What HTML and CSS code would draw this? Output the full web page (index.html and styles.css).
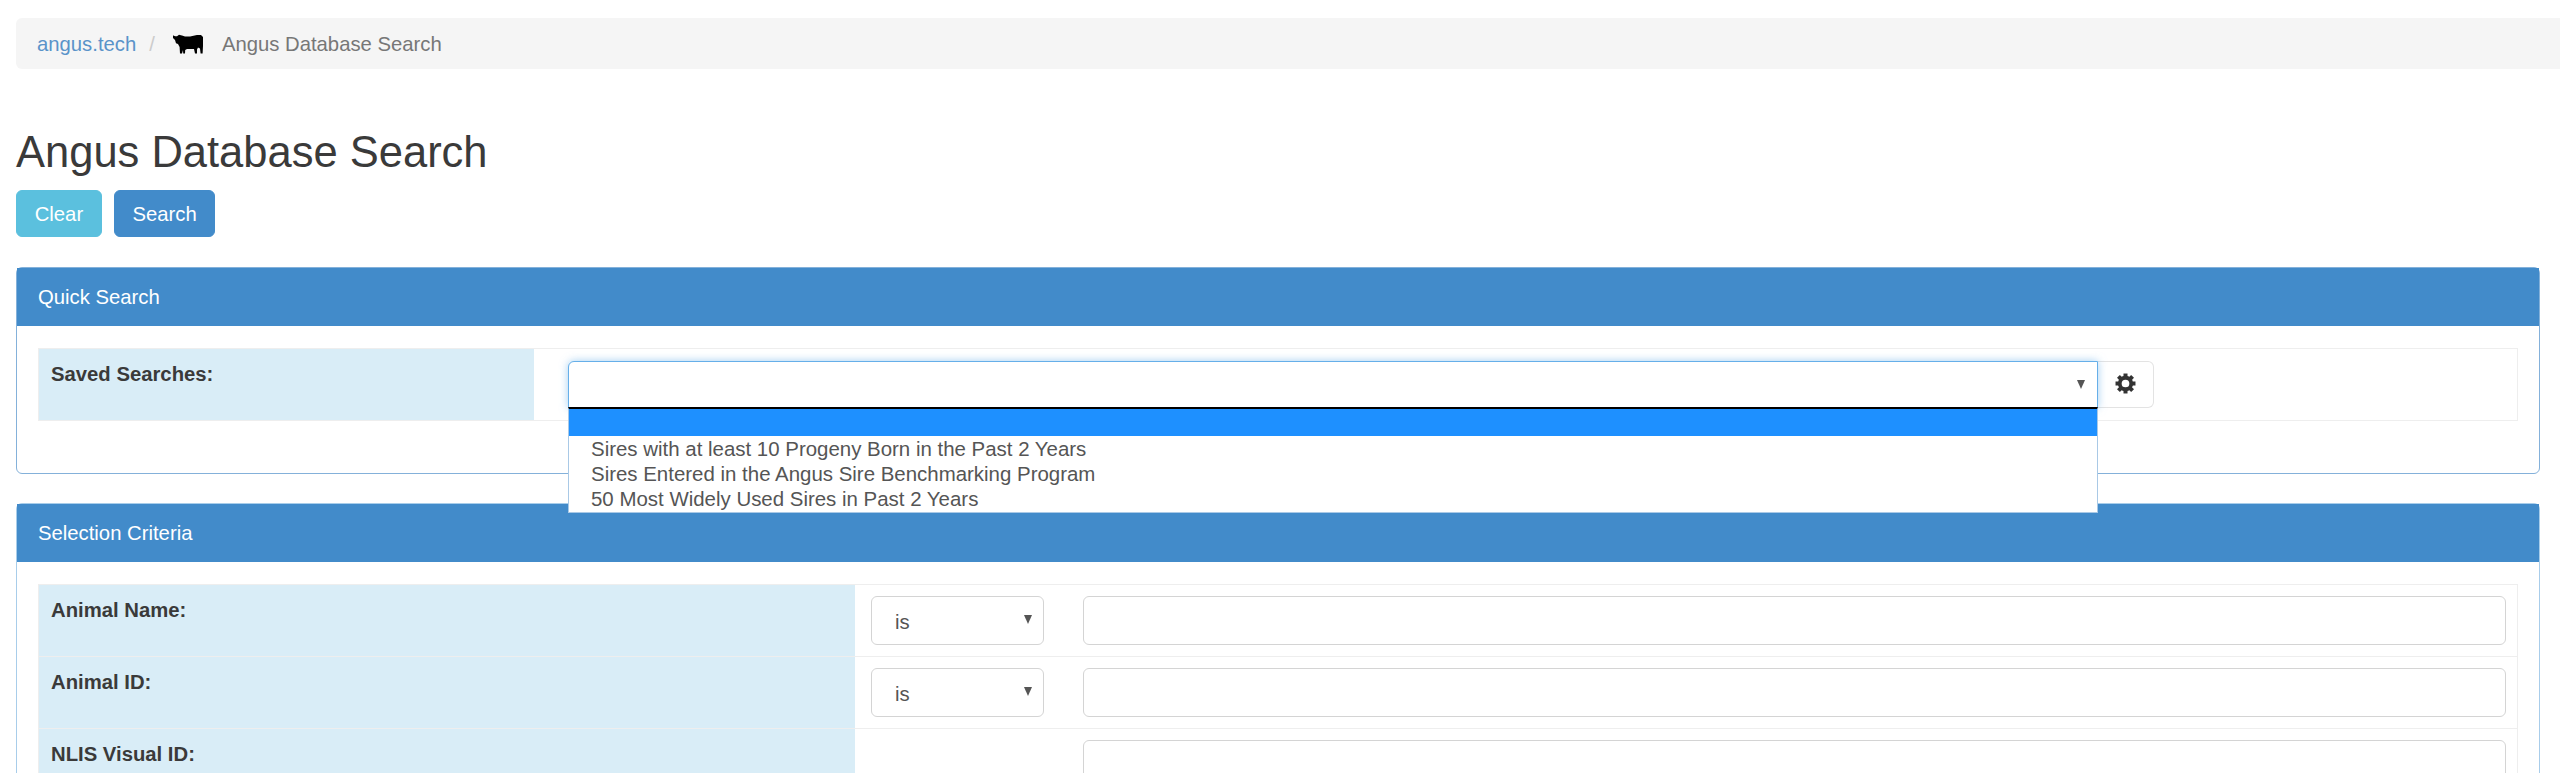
FILE: index.html
```html
<!DOCTYPE html>
<html lang="en">
<head>
<meta charset="utf-8">
<title>Angus Database Search</title>
<link rel="stylesheet" href="styles.css">
</head>
<body>
<nav class="crumbs">
  <a class="crumb-link" href="#">angus.tech</a>
  <span class="crumb-sep">/</span>
  <svg class="cow" viewBox="0 0 30 20" aria-hidden="true"><path d="M0 1.2C1.5 2 2.5 2.6 4 2.2L6 0.8 9 1.6 12 2.6 17 2.4 24 1 28 1 30 3 30 12 29.6 19.5 27.6 19.5 27 14.5 25 13.5 24 15.5 24 19.5 22 19.5 21 15 14 15 12.2 16 12 19.5 10.2 19.5 10 16 9 19.5 7 19.5 6.6 13 5 10 3 9.2 2 6 0 4Z"/></svg>
  <span class="crumb-current">Angus Database Search</span>
</nav>

<h1 class="title">Angus Database Search</h1>
<div class="actions">
  <button class="btn btn-info">Clear</button>
  <button class="btn btn-primary">Search</button>
</div>

<section class="panel panel-quick">
  <header class="panel-head">Quick Search</header>
  <div class="panel-body">
    <div class="row row-quick">
      <div class="label">Saved Searches:</div>
      <div class="field field-quick">
        <div class="combo">
          <div class="select select-focus"><span class="arrow"></span></div>
          <ul class="listbox">
            <li class="option option-active">&nbsp;</li>
            <li class="option">Sires with at least 10 Progeny Born in the Past 2 Years</li>
            <li class="option">Sires Entered in the Angus Sire Benchmarking Program</li>
            <li class="option">50 Most Widely Used Sires in Past 2 Years</li>
          </ul>
        </div>
        <button class="gear-btn" aria-label="Settings">
          <svg class="gear" viewBox="0 0 24 24" aria-hidden="true">
            <circle cx="12" cy="12" r="6.6" fill="none" stroke="#333" stroke-width="4.4"/>
            <g fill="#333">
              <rect x="9.7" y="0.6" width="4.6" height="5"/>
              <rect x="9.7" y="0.6" width="4.6" height="5" transform="rotate(45 12 12)"/>
              <rect x="9.7" y="0.6" width="4.6" height="5" transform="rotate(90 12 12)"/>
              <rect x="9.7" y="0.6" width="4.6" height="5" transform="rotate(135 12 12)"/>
              <rect x="9.7" y="0.6" width="4.6" height="5" transform="rotate(180 12 12)"/>
              <rect x="9.7" y="0.6" width="4.6" height="5" transform="rotate(225 12 12)"/>
              <rect x="9.7" y="0.6" width="4.6" height="5" transform="rotate(270 12 12)"/>
              <rect x="9.7" y="0.6" width="4.6" height="5" transform="rotate(315 12 12)"/>
            </g>
          </svg>
        </button>
      </div>
    </div>
  </div>
</section>

<section class="panel panel-criteria">
  <header class="panel-head">Selection Criteria</header>
  <div class="panel-body">
    <div class="row row-criteria">
      <div class="label label-wide">Animal Name:</div>
      <div class="field field-criteria">
        <div class="select select-op">is<span class="arrow"></span></div>
        <div class="input"></div>
      </div>
    </div>
    <div class="row row-criteria">
      <div class="label label-wide">Animal ID:</div>
      <div class="field field-criteria">
        <div class="select select-op">is<span class="arrow"></span></div>
        <div class="input"></div>
      </div>
    </div>
    <div class="row row-criteria">
      <div class="label label-wide">NLIS Visual ID:</div>
      <div class="field field-criteria">
        <div class="select-gap"></div>
        <div class="input"></div>
      </div>
    </div>
  </div>
</section>
</body>
</html>
```

FILE: styles.css
```css
* { box-sizing: border-box; }
html, body { height: 773px; overflow: hidden; }
body {
  margin: 0;
  padding: 18px 0 0 16px;
  background: #fff;
  color: #333;
  font-family: "Liberation Sans", Arial, sans-serif;
  font-size: 20.3px;
  line-height: 28px;
}
.crumbs {
  display: flex;
  align-items: center;
  height: 51px;
  padding-left: 21px;
  background: #f5f5f5;
  border-radius: 6px 0 0 6px;
}
.crumb-link { color: #5a93c9; text-decoration: none; }
.crumb-sep { color: #ccc; margin: 0 18px 0 13px; }
.cow { width: 30px; height: 20px; fill: #000; margin-right: 19px; }
.crumb-current { color: #777; }

.title {
  margin: 59px 0 0;
  font-size: 43.5px;
  line-height: 48px;
  font-weight: 400;
  color: #3a3a3a;
}
.actions { display: flex; gap: 12px; margin-top: 14px; }
.btn {
  height: 47px;
  padding: 0 17.7px;
  border: 1px solid transparent;
  border-radius: 6px;
  color: #fff;
  font: inherit;
}
.btn-info { background: #5bc0de; border-color: #5bc0de; }
.btn-primary { background: #428bca; border-color: #428bca; }

.panel {
  width: 2524px;
  border: 1.5px solid #84b1da;
  border-radius: 6px;
  background: #fff;
}
.panel-quick { height: 207px; margin-top: 30px; }
.panel-criteria { margin-top: 29px; border-color: #a8cdea; }
.panel-head {
  display: flex;
  align-items: center;
  height: 58px;
  padding-left: 21px;
  background: #428bca;
  color: #fff;
}
.panel-body { padding: 22px 21px 0; }

.row {
  display: flex;
  border: 1.5px solid #eee;
}
.row-quick { height: 73px; }
.row-criteria { height: 72px; border-bottom: 0; }
.label {
  flex: none;
  width: 495px;
  padding: 11px 12px;
  background: #d9edf7;
  font-weight: 700;
  color: #3a3a3a;
}
.label-wide { width: 816px; }
.field { display: flex; flex: 1; }
.field-quick { padding: 11.5px 0 0 34px; align-items: flex-start; }
.field-criteria { padding: 11px 11px 0 16px; align-items: flex-start; gap: 39px; }

.combo { position: relative; width: 1530px; }
.select {
  position: relative;
  height: 49px;
  background: #fff;
  border: 1.5px solid #d4d4d4;
  border-radius: 6px;
  color: #555;
}
.select-focus {
  height: 47px;
  border-color: #66afe9;
  border-radius: 6px 0 0 0;
  box-shadow: 0 0 8px rgba(102, 175, 233, .6);
}
.select-op { flex: none; width: 173px; padding: 11px 23px; }
.select-gap { flex: none; width: 173px; }
.arrow {
  position: absolute;
  right: 12px;
  top: 50%;
  margin-top: -4px;
  border-style: solid;
  border-width: 9px 4.5px 0;
  border-color: #555 transparent transparent;
}
.select-op .arrow { right: 11px; margin-top: -6px; }
.listbox {
  position: absolute;
  left: 0;
  right: 0;
  top: 46px;
  z-index: 5;
  margin: 0;
  padding: 0 0 1px;
  list-style: none;
  background: #fff;
  border: 1.5px solid #a9c9e6;
  border-top: 2.5px solid #000;
  color: #555;
  font-size: 20.45px;
  line-height: 25.3px;
}
.option { height: 25.3px; padding-left: 22px; white-space: nowrap; }
.option-active { height: 27px; background: #1e90ff; }

.gear-btn {
  display: flex;
  align-items: center;
  justify-content: center;
  width: 56px;
  height: 47px;
  padding: 0;
  background: #fff;
  border: 1.5px solid #e3e3e3;
  border-left: 0;
  border-radius: 0 6px 6px 0;
}
.gear { width: 21px; height: 21px; margin-bottom: 2px; }
.input {
  flex: 1;
  height: 49px;
  background: #fff;
  border: 1.5px solid #d4d4d4;
  border-radius: 6px;
}
```
